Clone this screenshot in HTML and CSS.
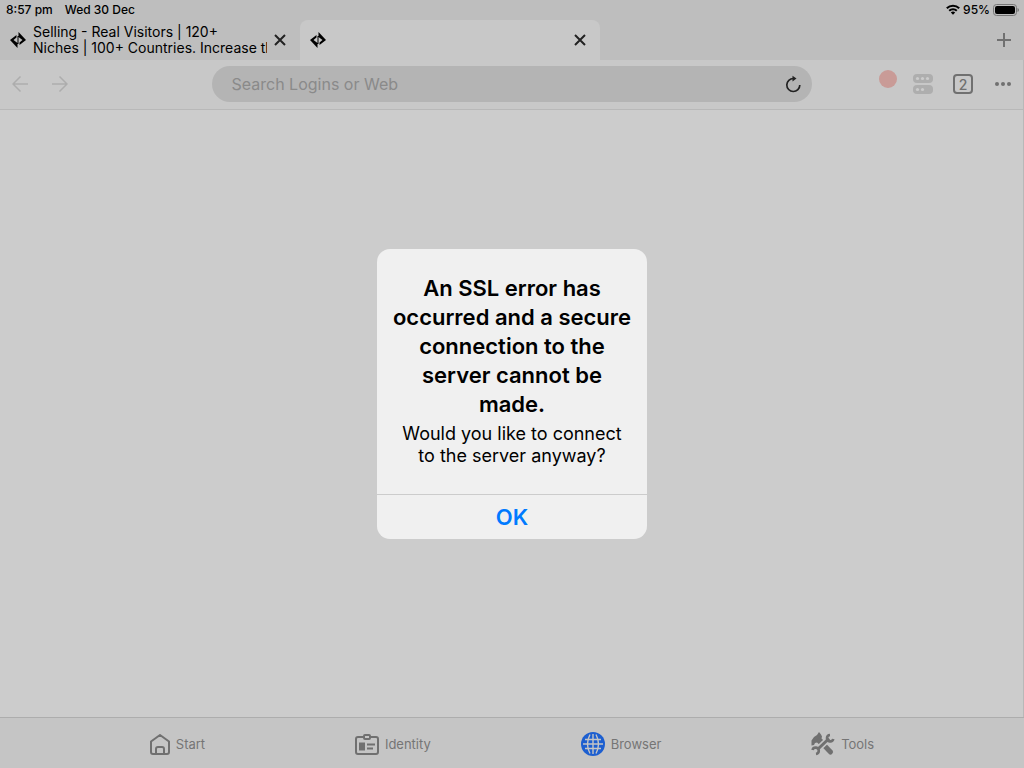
FILE: index.html
```html
<!DOCTYPE html>
<html lang="en">

<head>
    <meta charset="UTF-8">
    <title>Browser</title>
    <meta name="viewport" content="width=device-width,initial-scale=1">
    <link rel="stylesheet" href="styles.css">
</head>

<body>
    <header class="top">
        <div class="status">
            <span>8:57 pm</span>
            <span>Wed 30 Dec</span>
            <div class="status-right">
                <svg width="14" height="11" viewBox="0 0 14 11" fill="none" stroke="#000" stroke-width="2">
                    <path d="M.8 4.2a8.8 8.8 0 0 1 12.4 0M3.2 6.7a5.4 5.4 0 0 1 7.6 0" />
                    <path d="M7 10.8 4.8 8.6a3.1 3.1 0 0 1 4.4 0z" fill="#000" stroke="none" />
                </svg>
                <span>95%</span>
                <svg width="26" height="12" viewBox="0 0 26 12">
                    <rect x=".5" y=".5" width="23" height="11" rx="3" fill="none" stroke="#777" />
                    <rect x="2" y="2" width="20" height="8" rx="2" />
                    <path d="M24.500 4v4q1.500-.6 1.500-2t-1.500-2z" fill="#777" />
                </svg>
            </div>
        </div>
        <div class="tabs">
            <div class="tab">
                <svg class="favicon" width="16" height="16" viewBox="0 0 16 16">
                    <path d="M0 8 6.500 3v2.500L3.500 8l4 3v5zM16 8l-6.500 5v-2.500l3-2.500-4-3V0zM7.500 4h1v8h-1z" />
                </svg>
                <a class="tab-title" href="#">Selling - Real Visitors | 120+<br>Niches | 100+ Countries. Increase th</a>
                <button class="close" aria-label="Close tab">
                    <svg width="12" height="12" viewBox="0 0 12 12"><path d="m1 1 10 10M11 1 1 11" /></svg>
                </button>
            </div>
            <div class="tab active">
                <svg class="favicon" width="16" height="16" viewBox="0 0 16 16">
                    <path d="M0 8 6.500 3v2.500L3.500 8l4 3v5zM16 8l-6.500 5v-2.500l3-2.500-4-3V0zM7.500 4h1v8h-1z" />
                </svg>
                <a class="tab-title" href="#" aria-label="New tab"></a>
                <button class="close" aria-label="Close tab">
                    <svg width="12" height="12" viewBox="0 0 12 12"><path d="m1 1 10 10M11 1 1 11" /></svg>
                </button>
            </div>
            <button class="new-tab" aria-label="New tab">
                <svg width="14" height="14" viewBox="0 0 14 14"><path d="M7 0v14M0 7h14" /></svg>
            </button>
        </div>
    </header>
    <div class="toolbar">
        <div class="history">
            <button aria-label="Back"><svg width="16" height="16" viewBox="0 0 16 16"><path d="M16 8H1M8.500.5 1 8l7.500 7.500" /></svg></button>
            <button aria-label="Forward"><svg width="16" height="16" viewBox="0 0 16 16"><path d="M0 8h15M7.500.5 15 8l-7.500 7.500" /></svg></button>
        </div>
        <div class="search">
            <input type="text" placeholder="Search Logins or Web" aria-label="Search Logins or Web">
            <button aria-label="Reload">
                <svg width="16" height="18" viewBox="0 0 16 18">
                    <path d="M8.500 3.500a6.500 6.500 0 1 0 6.300 6.500" fill="none" stroke="#222" stroke-width="1.700" />
                    <path d="M7.500.8v5.800l4-3z" fill="#222" />
                </svg>
            </button>
        </div>
        <div class="actions">
            <button class="record" aria-label="Record"></button>
            <button aria-label="Logins">
                <svg width="20" height="20" viewBox="0 0 20 20">
                    <rect width="20" height="9" rx="4" fill="#aeaeae" />
                    <rect y="11" width="20" height="9" rx="4" fill="#aeaeae" />
                    <g fill="#ccc">
                        <circle cx="4.500" cy="4.500" r="1.600" />
                        <circle cx="9.500" cy="4.500" r="1.600" />
                        <circle cx="14.500" cy="4.500" r="1.600" />
                        <circle cx="4.500" cy="15.500" r="1.600" />
                        <circle cx="9.500" cy="15.500" r="1.600" />
                    </g>
                </svg>
            </button>
            <button class="count">2</button>
            <button class="more" aria-label="More">
                <svg width="16" height="4" viewBox="0 0 16 4" fill="#707070"><circle cx="2" cy="2" r="2" /><circle cx="8" cy="2" r="2" /><circle cx="14" cy="2" r="2" /></svg>
            </button>
        </div>
    </div>
    <main></main>
    <nav>
        <a href="#">
            <svg width="20" height="21" viewBox="0 0 20 21" fill="none" stroke="#707070" stroke-width="2" stroke-linejoin="round">
                <path d="M1 7.500 10 1l9 6.500V18q0 2-2 2H3q-2 0-2-2zM6 20v-5q0-2 2-2h4q2 0 2 2v5" />
            </svg>
            Start
        </a>
        <a href="#">
            <svg width="24" height="21" viewBox="0 0 24 21" fill="none" stroke="#707070" stroke-width="2">
                <path d="M8 3H3Q1 3 1 5v13q0 2 2 2h18q2 0 2-2V5q0-2-2-2h-5M12 10.500h8M12 14.500h6" />
                <rect x="9" y="1" width="6" height="4" rx="1" />
                <path d="M4 8.500h6v8H4z" fill="#707070" stroke="none" />
            </svg>
            Identity
        </a>
        <a href="#">
            <svg width="24" height="24" viewBox="0 0 24 24" fill="none" stroke="#c5c5c5" stroke-width="1.400">
                <circle cx="12" cy="12" r="12" fill="#1d5fd0" stroke="none" />
                <path d="M12 2v20M2 12h20M4 7.500h16M4 16.500h16M9 2.500q-5 9.500 0 19M15 2.500q5 9.500 0 19" />
            </svg>
            Browser
        </a>
        <a href="#">
            <!-- hammer under a wrench, the wrench keeps a light edge -->
            <svg width="24" height="24" viewBox="0 0 24 24" fill="none" stroke="#707070">
                <path d="M.5 13.500V8.500L3 5l3-2 2-3 2 2.500 1 2-.5 2L13 9l-4 4-3-2.500-2 .5-1 2z" fill="#707070" stroke="none" />
                <path d="m9 9 10.500 11" stroke-width="5" stroke-linecap="round" />
                <path d="M6.500 17.500 18 6.500" stroke="#c5c5c5" stroke-width="6" />
                <path d="M6.500 17.500 18 6.500" stroke-width="3" />
                <path d="M19 3a3.200 3.200 0 1 0 3.300 4M5 22a3.200 3.200 0 1 0-3.500-4" stroke-width="2.600" />
            </svg>
            Tools
        </a>
    </nav>
    <div class="overlay">
        <div class="alert" role="alertdialog" aria-labelledby="alert-title" aria-describedby="alert-text">
            <div class="alert-body">
                <h1 id="alert-title">An SSL error has occurred and a secure connection to the server cannot be made.</h1>
                <p id="alert-text">Would you like to connect to the server anyway?</p>
            </div>
            <button>OK</button>
        </div>
    </div>
</body>

</html>
```
FILE: styles.css
```css
* {
    margin: 0;
    padding: 0;
    box-sizing: border-box;
}

body {
    font-family: Inter, "Liberation Sans", sans-serif;
    display: flex;
    flex-direction: column;
    min-height: 100vh;
    background-color: #ccc;
    color: #000;
}

button {
    border: 0;
    background: none;
    font-family: inherit;
    display: flex;
    align-items: center;
    justify-content: center;
}

a {
    color: inherit;
    text-decoration: none;
}

svg {
    display: block;
    flex: none;
}

.top {
    background-color: #bebebe;
}

.status {
    display: flex;
    align-items: center;
    gap: 12px;
    height: 20px;
    padding: 0 5px 1px 6px;
    font-size: 12px;
    font-weight: 500;
}

.status-right {
    display: flex;
    align-items: center;
    gap: 3px;
    margin-left: auto;
}

.tabs {
    display: flex;
    height: 40px;
}

.tab {
    display: flex;
    align-items: center;
    gap: 7px;
    flex: 0 1 300px;
    min-width: 0;
    padding: 0 14px 0 10px;
}

.active {
    background-color: #c8c8c8;
    border-radius: 8px 8px 0 0;
}

.tab-title {
    flex: 1;
    overflow: hidden;
    font-size: 14px;
    line-height: 16px;
    white-space: nowrap;
}

.close svg {
    stroke: #222;
    stroke-width: 2;
}

.new-tab {
    width: 40px;
    margin-left: auto;
}

.new-tab svg {
    stroke: #707070;
    stroke-width: 2;
}

.toolbar {
    display: grid;
    grid-template-columns: 1fr minmax(0, 600px) 1fr;
    align-items: center;
    height: 50px;
    padding-bottom: 1px;
    background-color: #c8c8c8;
    border-bottom: 1px solid #b8b8b8;
    border-right: 1px solid #b8b8b8;
}

.history {
    display: flex;
    gap: 24px;
    padding-left: 12px;
}

.history svg {
    fill: none;
    stroke: #adadad;
    stroke-width: 1.5;
}

.search {
    display: flex;
    align-items: center;
    height: 36px;
    padding: 0 11px 0 20px;
    border-radius: 18px;
    background-color: #b4b4b4;
}

.search input {
    flex: 1;
    min-width: 0;
    border: 0;
    outline: 0;
    background: none;
    font-family: inherit;
    font-size: 16px;
}

.search input::placeholder {
    color: #8a8a8a;
}

.actions {
    display: flex;
    align-items: center;
    justify-content: flex-end;
    gap: 20px;
    padding-right: 12px;
}

.record {
    width: 18px;
    height: 18px;
    margin: 0 -4px 10px 0;
    border-radius: 50%;
    background-color: #c99b97;
}

.count {
    width: 20px;
    height: 20px;
    border: 2px solid #707070;
    border-radius: 4px;
    color: #707070;
    font-size: 14px;
    font-weight: 500;
}

.more {
    padding-left: 2px;
}

main {
    flex: 1;
    border-right: 1px solid #b8b8b8;
}

nav {
    display: flex;
    justify-content: space-evenly;
    height: 51px;
    padding-top: 2px;
    border-top: 1px solid #adadad;
    background-color: #c5c5c5;
}

nav a {
    display: flex;
    align-items: center;
    gap: 6px;
    color: #757575;
    font-size: 13px;
}

.overlay {
    position: fixed;
    inset: 0;
    display: flex;
    align-items: center;
    justify-content: center;
    padding-top: 20px;
}

.alert {
    width: 270px;
    border-radius: 13px;
    background-color: #f0f0f0;
    text-align: center;
}

.alert-body {
    padding: 25px 14px 27px;
}

.alert h1 {
    font-size: 22px;
    line-height: 29px;
    font-weight: 600;
}

.alert p {
    margin-top: 4px;
    padding: 0 10px;
    font-size: 18px;
    line-height: 22px;
}

.alert button {
    width: 100%;
    height: 45px;
    border-top: 1px solid #ccc;
    color: #007aff;
    font-size: 22px;
    font-weight: 600;
}
```
